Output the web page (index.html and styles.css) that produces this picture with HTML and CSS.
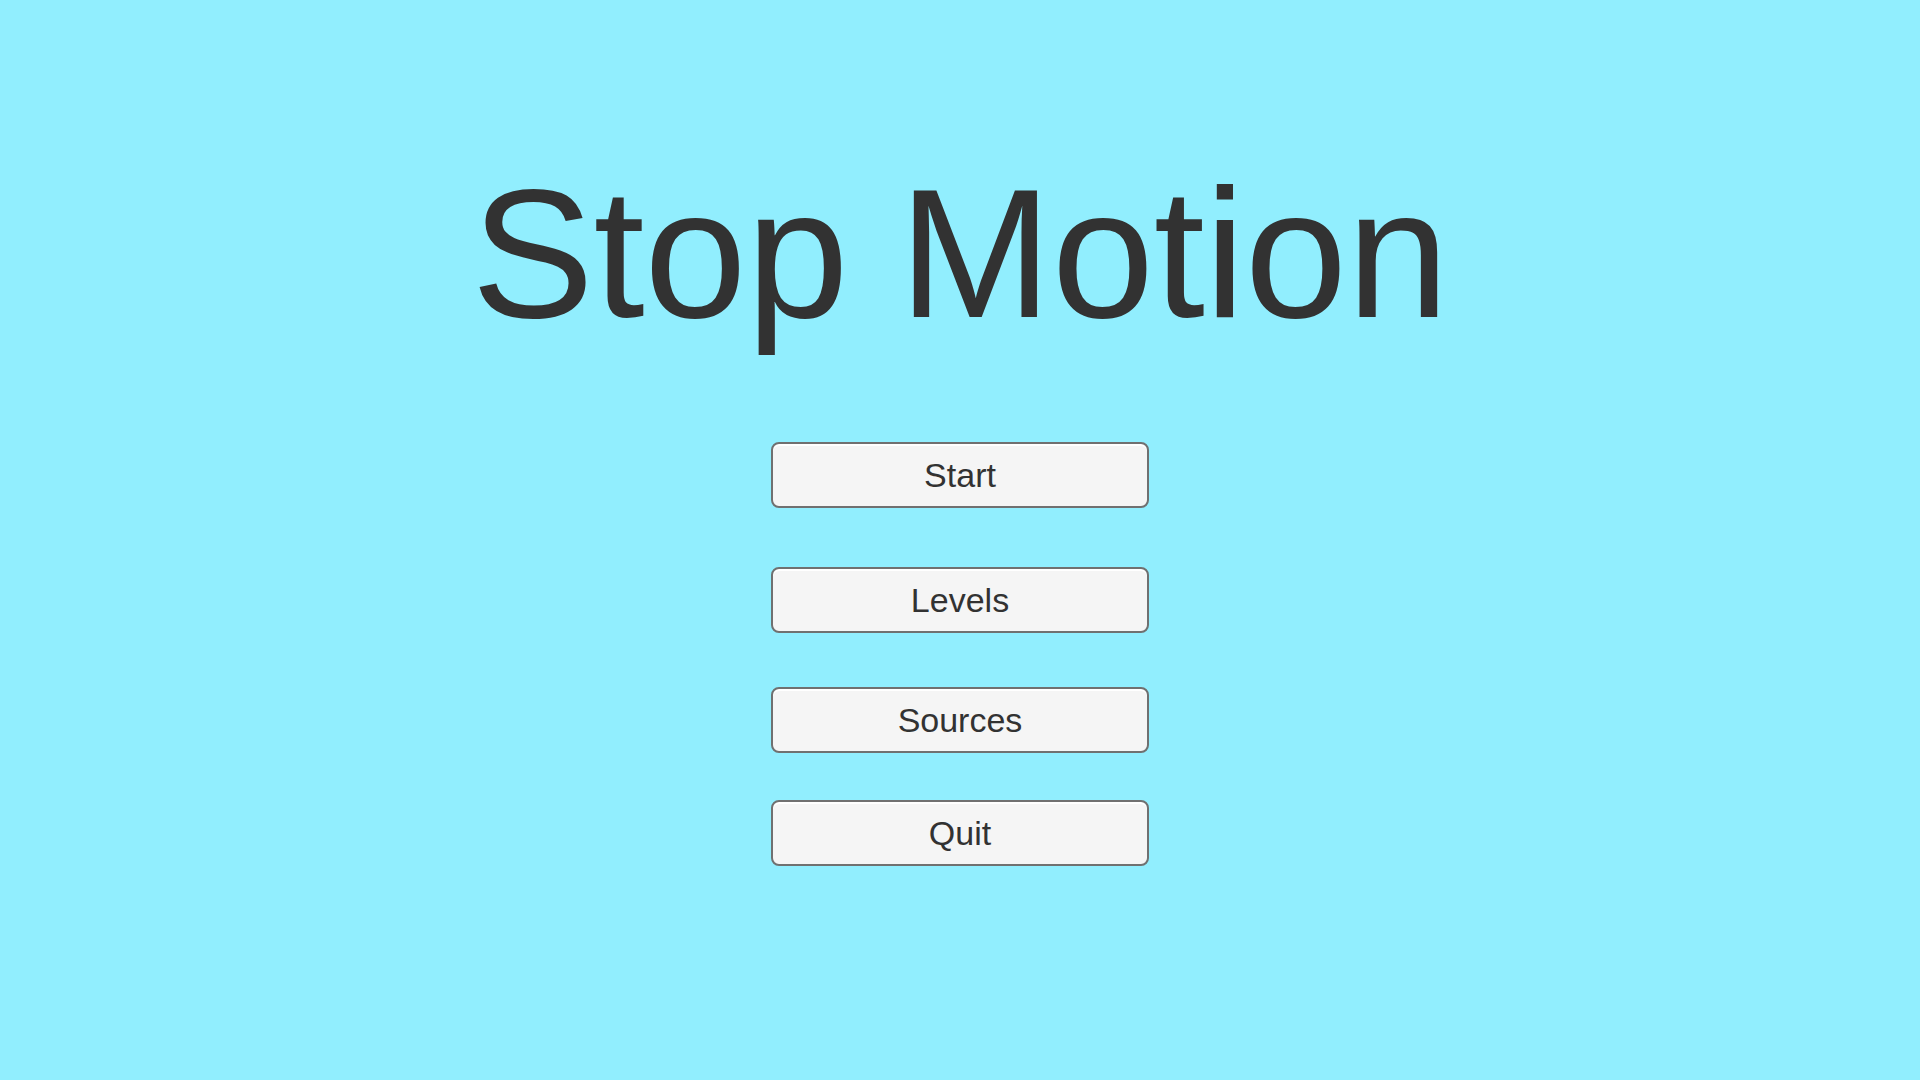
FILE: index.html
```html
<!DOCTYPE html>
<html lang="en">
<head>
<meta charset="utf-8">
<title>Stop Motion</title>
<link rel="stylesheet" href="styles.css">
</head>
<body>
<main class="menu">
  <h1 class="title">Stop Motion</h1>
  <nav class="buttons">
    <button class="btn btn-start">Start</button>
    <button class="btn btn-levels">Levels</button>
    <button class="btn btn-sources">Sources</button>
    <button class="btn btn-quit">Quit</button>
  </nav>
</main>
</body>
</html>
```

FILE: styles.css
```css
html, body {
  margin: 0;
  padding: 0;
  width: 100%;
  height: 100%;
  background: #91eefe;
  overflow: hidden;
}

.menu {
  display: flex;
  flex-direction: column;
  align-items: center;
  padding-top: 162px;
  font-family: "Liberation Sans", Arial, sans-serif;
  color: #323232;
}

.title {
  margin: 0;
  font-size: 184px;
  font-weight: normal;
  line-height: 183px;
  height: 183px;
  letter-spacing: -0.4px;
  color: #323232;
}

.buttons {
  display: flex;
  flex-direction: column;
  align-items: center;
  margin-top: 97px;
}

.btn {
  box-sizing: border-box;
  width: 378px;
  height: 66px;
  display: flex;
  align-items: center;
  justify-content: center;
  padding: 0;
  font-family: "Liberation Sans", Arial, sans-serif;
  font-size: 34px;
  color: #323232;
  background: #f5f5f5;
  border: 2px solid #707070;
  border-radius: 8px;
  box-shadow: inset 0 2px 0 #ffffff;
}

.btn-levels { margin-top: 59px; }
.btn-sources { margin-top: 54px; }
.btn-quit { margin-top: 47px; }
```
